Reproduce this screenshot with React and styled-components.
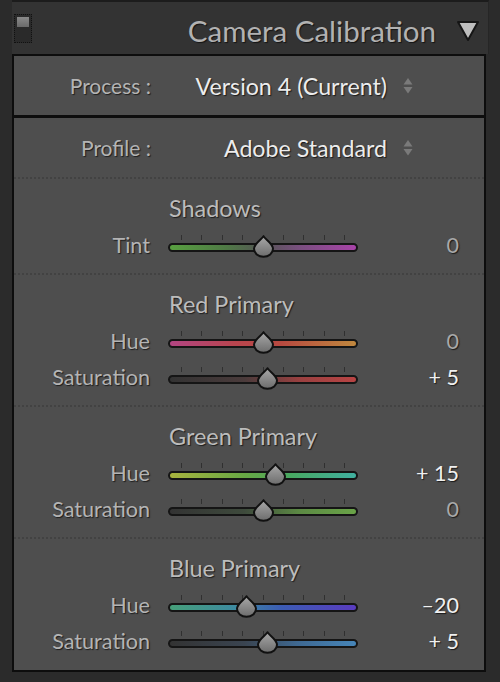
import React from "react"
import styled, { createGlobalStyle } from "styled-components"

const GlobalStyle = createGlobalStyle`
  html, body {
    margin: 0;
    padding: 0;
    background: #2b2b2b;
  }
  body {
    font-family: Lato, "Open Sans", sans-serif;
    -webkit-font-smoothing: antialiased;
  }
`

const TRACKS = {
  tint: "linear-gradient(90deg, #58a040 0%, #4f7a45 30%, #555 50%, #7a4f80 70%, #a843a8 100%)",
  redHue: "linear-gradient(90deg, #b24582 0%, #b8454e 35%, #b84a40 60%, #c0883e 100%)",
  redSat: "linear-gradient(90deg, #333 0%, #4a3b3b 40%, #9a4040 70%, #b84444 100%)",
  greenHue: "linear-gradient(90deg, #a8b43e 0%, #68a844 40%, #48a862 65%, #40b0a0 100%)",
  greenSat: "linear-gradient(90deg, #333 0%, #3e4a3c 40%, #5c8a44 70%, #6aa448 100%)",
  blueHue: "linear-gradient(90deg, #46a07a 0%, #3d8aa0 35%, #3c5cb4 60%, #5a3cc0 100%)",
  blueSat: "linear-gradient(90deg, #333 0%, #3a4450 40%, #3f6a94 70%, #4685b8 100%)",
}

const sections = [
  {
    title: "Shadows",
    rows: [{ label: "Tint", value: 0, track: TRACKS.tint }],
  },
  {
    title: "Red Primary",
    rows: [
      { label: "Hue", value: 0, track: TRACKS.redHue },
      { label: "Saturation", value: 5, track: TRACKS.redSat },
    ],
  },
  {
    title: "Green Primary",
    rows: [
      { label: "Hue", value: 15, track: TRACKS.greenHue },
      { label: "Saturation", value: 0, track: TRACKS.greenSat },
    ],
  },
  {
    title: "Blue Primary",
    rows: [
      { label: "Hue", value: -20, track: TRACKS.blueHue },
      { label: "Saturation", value: 5, track: TRACKS.blueSat },
    ],
  },
]

const formatValue = (v) => {
  if (v > 0) return `+ ${v}`
  if (v < 0) return `\u2013${Math.abs(v)}`
  return "0"
}

const App = () => {
  return (
    <>
      <GlobalStyle />
      <Page>
        <Header>
          <Toggle>
            <ToggleTop />
          </Toggle>
          <Title>Camera Calibration</Title>
          <Collapse width="24" height="22" viewBox="0 0 24 22">
            <polygon
              points="2,2 22,2 12,20"
              fill="#bdbdbd"
              stroke="#151515"
              strokeWidth="2"
              strokeLinejoin="round"
            />
          </Collapse>
        </Header>

        <Panel>
          <PopupRow>
            <PopupLabel>Process :</PopupLabel>
            <PopupValue>Version 4 (Current)</PopupValue>
            <Stepper />
          </PopupRow>
          <Divider />
          <PopupRow>
            <PopupLabel>Profile :</PopupLabel>
            <PopupValue>Adobe Standard</PopupValue>
            <Stepper />
          </PopupRow>

          {sections.map((s, i) => (
            <Section key={s.title} last={i === sections.length - 1}>
              <SectionTitle>{s.title}</SectionTitle>
              {s.rows.map((r) => (
                <SliderRow key={r.label}>
                  <RowLabel>{r.label}</RowLabel>
                  <Slider value={r.value} track={r.track} />
                  <RowValue active={r.value !== 0}>{formatValue(r.value)}</RowValue>
                </SliderRow>
              ))}
            </Section>
          ))}
        </Panel>
      </Page>
    </>
  )
}
export default App

const Stepper = () => (
  <StepIcon width="10" height="18" viewBox="0 0 10 18">
    <polygon points="5,1 9.5,7.5 0.5,7.5" fill="#7a7a7a" />
    <polygon points="0.5,10 9.5,10 5,16.5" fill="#7a7a7a" />
  </StepIcon>
)

const Slider = ({ value, track }) => {
  const pos = 95 + value * 0.85
  return (
    <SliderBox>
      <Ticks>
        {Array.from({ length: 9 }).map((_, i) => (
          <Tick key={i} />
        ))}
      </Ticks>
      <Track fill={track} />
      <Thumb style={{ left: `${pos - 11.5}px` }} width="23" height="23" viewBox="0 0 23 23">
        <defs>
          <linearGradient id="thumbFill" x1="0" y1="0" x2="0" y2="1">
            <stop offset="0" stopColor="#a8a8a8" />
            <stop offset="1" stopColor="#6c6c6c" />
          </linearGradient>
        </defs>
        <path
          d="M11.5 1.2 C 13.5 4.5, 21 8.5, 21 13.8 A 9.5 8 0 0 1 2 13.8 C 2 8.5, 9.5 4.5, 11.5 1.2 Z"
          fill="url(#thumbFill)"
          stroke="#111"
          strokeWidth="2"
          strokeLinejoin="round"
        />
      </Thumb>
    </SliderBox>
  )
}

const Page = styled.div`
  width: 500px;
  height: 682px;
  overflow: hidden;
  background: #2b2b2b;
`

const Header = styled.div`
  display: flex;
  align-items: center;
  box-sizing: border-box;
  width: 477px;
  height: 54px;
  margin-left: 12px;
  background: #333333;
  border-top: 2px solid #1c1c1c;
  border-right: 1px solid #262626;
  padding-top: 5px;
`

const Toggle = styled.div`
  box-sizing: border-box;
  width: 18px;
  height: 29px;
  margin: 0 0 4px 2px;
  padding: 2px;
  background: #2a2a2a;
  border: 1px dotted #111;
`

const ToggleTop = styled.div`
  height: 10px;
  background: linear-gradient(180deg, #8a8a8a, #6a6a6a);
`

const Title = styled.div`
  margin-left: auto;
  font-size: 29.5px;
  line-height: 34px;
  color: #b2b2b2;
  text-shadow: 1px 1px 1px #141414;
`

const Collapse = styled.svg`
  display: block;
  margin: 0 8px 0 20px;
`

const Panel = styled.div`
  width: 474px;
  box-sizing: border-box;
  margin-left: 12px;
  background: #4e4e4e;
  border: 2px solid #0d0d0d;
`

const PopupRow = styled.div`
  display: flex;
  align-items: center;
  height: 59px;
`

const PopupLabel = styled.div`
  width: 137px;
  text-align: right;
  font-size: 21px;
  color: #b4b4b4;
  text-shadow: 1px 1px 1px #1e1e1e;
`

const PopupValue = styled.div`
  width: 236px;
  text-align: right;
  font-size: 23.2px;
  color: #ececec;
  text-shadow: 1px 1px 1px #1a1a1a;
`

const StepIcon = styled.svg`
  display: block;
  margin-left: 16px;
`

const Divider = styled.div`
  height: 3px;
  background: #0d0d0d;
`

const Section = styled.div`
  border-top: 2px dotted #424242;
  padding: 17px 0 ${(p) => (p.last ? "11px" : "10px")};
`

const SectionTitle = styled.div`
  height: 24px;
  line-height: 24px;
  padding-left: 155px;
  margin-bottom: 7px;
  font-size: 23.4px;
  color: #bcbcbc;
  text-shadow: 1px 1px 1px #1e1e1e;
`

const SliderRow = styled.div`
  display: grid;
  grid-template-columns: 136px 190px 83px;
  column-gap: 18px;
  align-items: center;
  height: 36px;
`

const RowLabel = styled.div`
  text-align: right;
  font-size: 21.6px;
  color: #b4b4b4;
  text-shadow: 1px 1px 1px #1e1e1e;
`

const RowValue = styled.div`
  text-align: right;
  font-size: 21.5px;
  color: ${(p) => (p.active ? "#f0f0f0" : "#a8a8a8")};
  text-shadow: 1px 1px 1px #1a1a1a;
`

const SliderBox = styled.div`
  position: relative;
  height: 36px;
`

const Ticks = styled.div`
  display: flex;
  justify-content: space-between;
  padding: 8px 13px 0;
  height: 5px;
`

const Tick = styled.span`
  width: 1px;
  height: 5px;
  background: #303030;
`

const Track = styled.div`
  box-sizing: border-box;
  height: 9px;
  margin-top: 3px;
  border: 2px solid #151515;
  border-radius: 5px;
  background: ${(p) => p.fill};
`

const Thumb = styled.svg`
  position: absolute;
  top: 8px;
  display: block;
`
